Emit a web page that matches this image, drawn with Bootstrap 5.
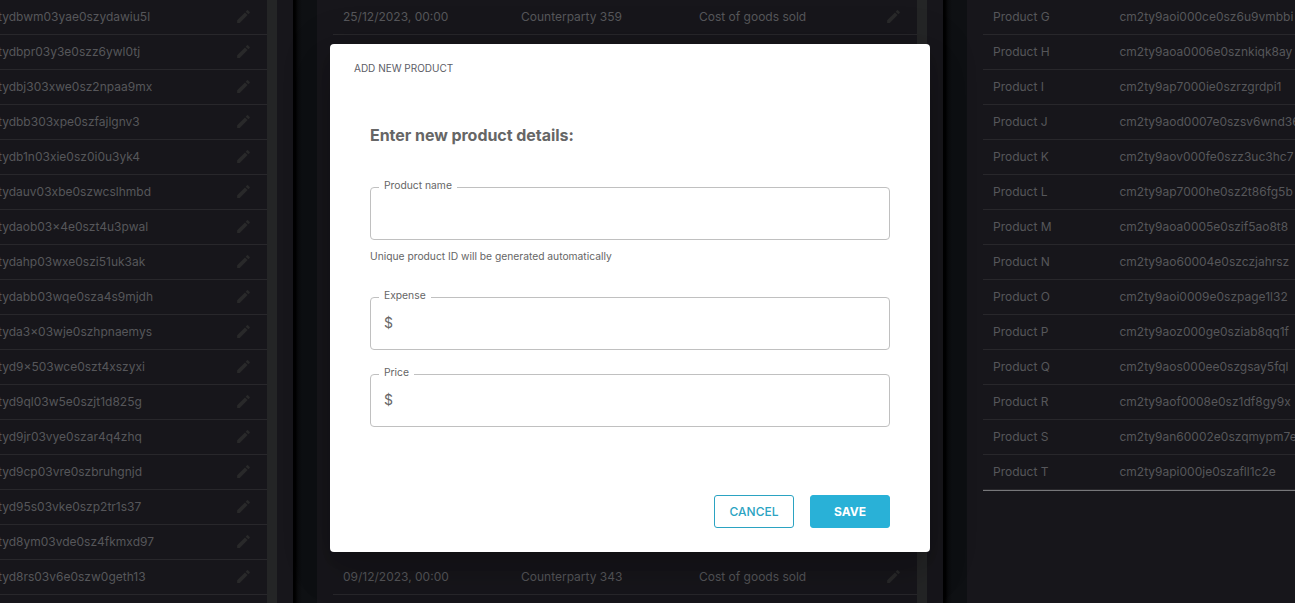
<!DOCTYPE html>
<html lang="en">
<head>
<meta charset="utf-8">
<meta name="viewport" content="width=device-width, initial-scale=1">
<title>Add new product</title>
<link href="https://cdn.jsdelivr.net/npm/bootstrap@5.3.0/dist/css/bootstrap.min.css" rel="stylesheet">
<style>
  body { font-family: Inter, "Liberation Sans", sans-serif; background: #0e1013; color: #56565a; font-size: 12px; height: 603px; }
  .board { height: 603px; }
  .pane { background: #17161b; }
  .pane-left { width: 293px; padding-right: 16px; }
  .pane-mid { width: 626px; padding: 0 16px; }
  .pane-right { width: 328px; padding-left: 16px; }
  .gutter { width: 24px; background: linear-gradient(90deg, #000 0, #000 2px, #0a0b0d 5px, #0e1013 9px); }
  .scroller { width: 10px; background: #242526; }
  .line-item { height: 35px; border-bottom: 1px solid #28272b; line-height: 18px; white-space: nowrap; }
  .line-item svg { width: 17px; height: 17px; fill: #29292a; margin: 0 15px 1px 0; }
  .ids { margin-left: -2px; }
  .c-date { width: 178px; padding-left: 10px; }
  .c-party { width: 178px; padding-left: 10px; }
  .c-kind { padding-left: 10px; }
  .c-name { width: 136.5px; padding-left: 10px; }
  .table-end { height: 1px; background: #77777a; }
  .sheet { width: 600px; height: 508px; margin-top: 44px; border-radius: 4px; background: #fff; color: #666;
    box-shadow: 0 11px 15px -7px rgba(0,0,0,.16), 0 24px 38px 3px rgba(0,0,0,.1), 0 9px 46px 8px rgba(0,0,0,.1); }
  .sheet-title { padding: 17px 24px 0; font-size: 10px; line-height: 15px; color: #5c5c66; }
  .sheet-body { padding: 0 40px; }
  .sheet-body h2 { font-size: 16px; line-height: 24px; font-weight: 700; letter-spacing: -.04px; margin: 47px 0 33px; }
  .field { height: 60px; border: 1px solid #c0c0c0; border-radius: 4px; padding: 0 8px; margin: 0; }
  .field legend { float: none; width: auto; margin: 0; padding: 0 5px 4px; font-size: 10.3px; line-height: 11px; height: 15px; }
  .field .dollar { padding: 8px 5px 0; font-size: 14px; line-height: 20px; }
  .field-next { margin-top: 17px; }
  .hint { font-size: 10.28px; line-height: 16px; margin: 8px 0 26px; }
  .actions { margin-top: 68px; }
  .action { width: 80px; height: 33px; font-size: 12px; line-height: 18px; padding: 0; border-radius: 3px; }
  .action-cancel { color: #2ba3c2; border-color: #2ba3c2; font-weight: 500; }
  .action-save, .action-save:hover { color: #fff; background: #29b1d7; border-color: #29b1d7; font-weight: 700; }
</style>
</head>
<body class="overflow-hidden position-relative">
<svg class="d-none"><symbol id="pencil" viewBox="0 0 24 24"><path d="M3 17.25V21h3.75L17.81 9.94l-3.75-3.75L3 17.25zM20.71 7.04a1 1 0 0 0 0-1.41l-2.34-2.34a1 1 0 0 0-1.41 0l-1.83 1.83 3.75 3.75 1.83-1.83z"/></symbol></svg>

<main class="board d-flex overflow-hidden">
  <section class="pane pane-left d-flex flex-shrink-0"><div class="flex-grow-1" id="transactions"></div><div class="scroller"></div></section>
  <div class="gutter flex-shrink-0"></div>
  <section class="pane pane-mid d-flex flex-shrink-0">
    <div class="flex-grow-1 d-flex flex-column justify-content-between" id="ledger">
      <div class="line-item d-flex align-items-center"><span class="c-date">25/12/2023, 00:00</span><span class="c-party">Counterparty 359</span><span class="c-kind flex-grow-1">Cost of goods sold</span><svg><use href="#pencil"/></svg></div>
      <div class="line-item d-flex align-items-center mb-2"><span class="c-date">09/12/2023, 00:00</span><span class="c-party">Counterparty 343</span><span class="c-kind flex-grow-1">Cost of goods sold</span><svg><use href="#pencil"/></svg></div>
    </div>
    <div class="scroller"></div>
  </section>
  <div class="gutter flex-shrink-0"></div>
  <section class="pane pane-right flex-shrink-0 overflow-hidden"><div id="products"></div><div class="table-end"></div></section>
</main>

<div class="position-absolute top-0 start-0 w-100 d-flex justify-content-center" style="padding-right:35px">
  <div class="sheet flex-shrink-0" role="dialog" aria-label="Add new product">
    <div class="sheet-title">ADD NEW PRODUCT</div>
    <div class="sheet-body">
      <h2>Enter new product details:</h2>
      <fieldset class="field"><legend>Product name</legend></fieldset>
      <p class="hint">Unique product ID will be generated automatically</p>
      <fieldset class="field"><legend>Expense</legend><div class="dollar">$</div></fieldset>
      <fieldset class="field field-next"><legend>Price</legend><div class="dollar">$</div></fieldset>
      <div class="actions d-flex justify-content-end gap-3">
        <button class="btn action action-cancel" type="button">CANCEL</button>
        <button class="btn action action-save" type="button">SAVE</button>
      </div>
    </div>
  </div>
</div>

<script src="https://cdn.jsdelivr.net/npm/bootstrap@5.3.0/dist/js/bootstrap.bundle.min.js"></script>
<script>
  const ids = ["tydbwm03yae0szydawiu5l","tydbpr03y3e0szz6ywl0tj","tydbj303xwe0sz2npaa9mx","tydbb303xpe0szfajlgnv3","tydb1n03xie0sz0i0u3yk4","tydauv03xbe0szwcslhmbd","tydaob03x4e0szt4u3pwal","tydahp03wxe0szi51uk3ak","tydabb03wqe0sza4s9mjdh","tyda3x03wje0szhpnaemys","tyd9x503wce0szt4xszyxi","tyd9ql03w5e0szjt1d825g","tyd9jr03vye0szar4q4zhq","tyd9cp03vre0szbruhgnjd","tyd95s03vke0szp2tr1s37","tyd8ym03vde0sz4fkmxd97","tyd8rs03v6e0szw0geth13"];
  const products = ["cm2ty9aoi000ce0sz6u9vmbbi","cm2ty9aoa0006e0sznkiqk8ay","cm2ty9ap7000ie0szrzgrdpi1","cm2ty9aod0007e0szsv6wnd36","cm2ty9aov000fe0szz3uc3hc7","cm2ty9ap7000he0sz2t86fg5b","cm2ty9aoa0005e0szif5ao8t8","cm2ty9ao60004e0szczjahrsz","cm2ty9aoi0009e0szpage1l32","cm2ty9aoz000ge0sziab8qq1f","cm2ty9aos000ee0szgsay5fql","cm2ty9aof0008e0sz1df8gy9x","cm2ty9an60002e0szqmypm7e","cm2ty9api000je0szafll1c2e"];
  document.getElementById("transactions").innerHTML = ids.map(id =>
    `<div class="line-item d-flex align-items-center"><span class="ids flex-grow-1">${id}</span><svg><use href="#pencil"/></svg></div>`).join("");
  document.getElementById("products").innerHTML = products.map((id, i) =>
    `<div class="line-item d-flex align-items-center"><span class="c-name flex-shrink-0">Product ${String.fromCharCode(71 + i)}</span><span>${id}</span></div>`).join("");
</script>
</body>
</html>
